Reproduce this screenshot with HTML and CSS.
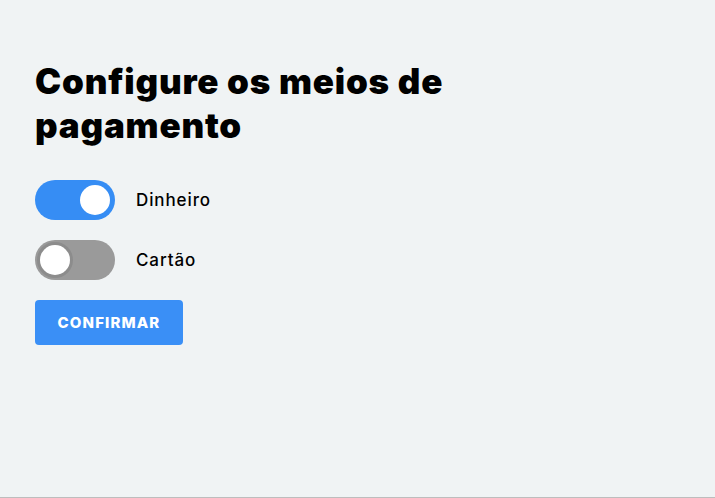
FILE: index.html
```html
<!DOCTYPE html>
<html lang="pt">
<head>
<meta charset="utf-8">
<link rel="stylesheet" href="styles.css">
</head>
<body>
<main class="page">
  <h1 class="title">Configure os meios de pagamento</h1>
  <div class="options">
    <label class="option">
      <span class="toggle on"><span class="knob"></span></span>
      <span class="label">Dinheiro</span>
    </label>
    <label class="option">
      <span class="toggle off"><span class="knob"></span></span>
      <span class="label">Cartão</span>
    </label>
  </div>
  <button class="confirm">CONFIRMAR</button>
</main>
</body>
</html>
```

FILE: styles.css
```css
html, body {
  margin: 0;
  height: 100%;
}
body {
  background: #f0f3f4;
  font-family: Inter, "Noto Sans", sans-serif;
  color: #000;
  box-sizing: border-box;
  border-bottom: 1px solid #bdbdbd;
}
.page {
  padding: 59px 35px 0;
}
.title {
  margin: 0;
  width: 440px;
  font-size: 35px;
  font-weight: 900;
  line-height: 44px;
  letter-spacing: 0.8px;
}
.options {
  margin-top: 33px;
  display: flex;
  flex-direction: column;
  gap: 20px;
}
.option {
  display: flex;
  align-items: center;
  gap: 21px;
}
.toggle {
  width: 80px;
  height: 40px;
  border-radius: 20px;
  display: flex;
  align-items: center;
  padding: 0 5px;
  box-sizing: border-box;
}
.toggle.on {
  background: #368df4;
  justify-content: flex-end;
}
.toggle.off {
  background: #9a9a9a;
  justify-content: flex-start;
}
.knob {
  width: 30px;
  height: 30px;
  border-radius: 50%;
  background: #fff;
}
.toggle.off .knob {
  box-shadow: 0 0 0 3px #8c8c8c;
}
.label {
  font-size: 17px;
  font-weight: 500;
  letter-spacing: 0.9px;
}
.confirm {
  margin-top: 20px;
  width: 148px;
  height: 45px;
  border: 0;
  border-radius: 4px;
  background: #3a8ff6;
  color: #fff;
  font-family: Inter, "Noto Sans", sans-serif;
  font-size: 15px;
  font-weight: 800;
  letter-spacing: 1.1px;
  padding: 0;
}
```
